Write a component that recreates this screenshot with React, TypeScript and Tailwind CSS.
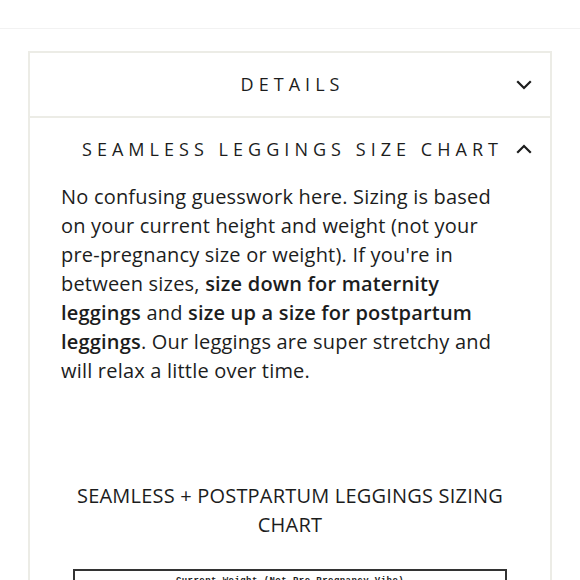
import React, { useState } from "react";

const font = { fontFamily: '"Open Sans", "Liberation Sans", sans-serif' };

const Chevron = ({ up }: { up?: boolean }) => (
  <svg
    width="16"
    height="10"
    viewBox="0 0 16 10"
    fill="none"
    stroke="#1c1d1d"
    strokeWidth="2.2"
    strokeLinecap="square"
    className={up ? "rotate-180" : ""}
  >
    <path d="M2 2l6 6 6-6" />
  </svg>
);

const App: React.FC = () => {
  const [openDetails, setOpenDetails] = useState<boolean>(false);
  const [openChart, setOpenChart] = useState<boolean>(true);

  return (
    <div className="w-[580px] h-[580px] overflow-hidden bg-white text-[#1c1d1d]" style={font}>
      <div className="h-[29px] border-b border-[#f2f2f2]" />
      <div className="mx-[28px] mt-[22px] border-2 border-[#ecece6]">
        <button
          onClick={() => setOpenDetails(!openDetails)}
          className="relative flex h-[63px] w-full items-center justify-center"
        >
          <span className="pl-[0.28em] text-[18px] tracking-[0.28em] font-normal">DETAILS</span>
          <span className="absolute right-[18px] top-[27px]">
            <Chevron up={openDetails} />
          </span>
        </button>
        <div className="border-t-2 border-[#ecece6]">
          <button
            onClick={() => setOpenChart(!openChart)}
            className="relative flex h-[62px] w-full items-center justify-center"
          >
            <span className="pl-[0.28em] text-[18px] tracking-[0.28em] font-normal">
              SEAMLESS LEGGINGS SIZE CHART
            </span>
            <span className="absolute right-[18px] top-[26px]">
              <Chevron up={openChart} />
            </span>
          </button>
          {openChart && (
            <div className="px-[31px] pt-[2px] pb-8">
              <p className="text-[20px] leading-[29px] tracking-[0.01em]">
                No confusing guesswork here. Sizing is based on your current height and weight (not
                your pre-pregnancy size or weight). If you're in between sizes,{" "}
                <strong className="font-semibold">size down for maternity leggings</strong> and{" "}
                <strong className="font-semibold">size up a size for postpartum leggings</strong>. Our
                leggings are super stretchy and will relax a little over time.
              </p>
              <div className="h-[96px]" />
              <h3 className="text-center text-[20px] leading-[29px] tracking-[0.01em] font-normal">
                SEAMLESS + POSTPARTUM LEGGINGS SIZING CHART
              </h3>
              <div className="mx-[12px] mt-[30px] border-2 border-[#333] pt-[4px]">
                <p
                  className="text-center text-[9px] font-bold tracking-[0.05em]"
                  style={{ fontFamily: '"Liberation Mono", monospace' }}
                >
                  Current Weight (Not Pre-Pregnancy Vibe)
                </p>
                <div className="h-[200px]" />
              </div>
            </div>
          )}
        </div>
      </div>
    </div>
  );
};

export default App;
